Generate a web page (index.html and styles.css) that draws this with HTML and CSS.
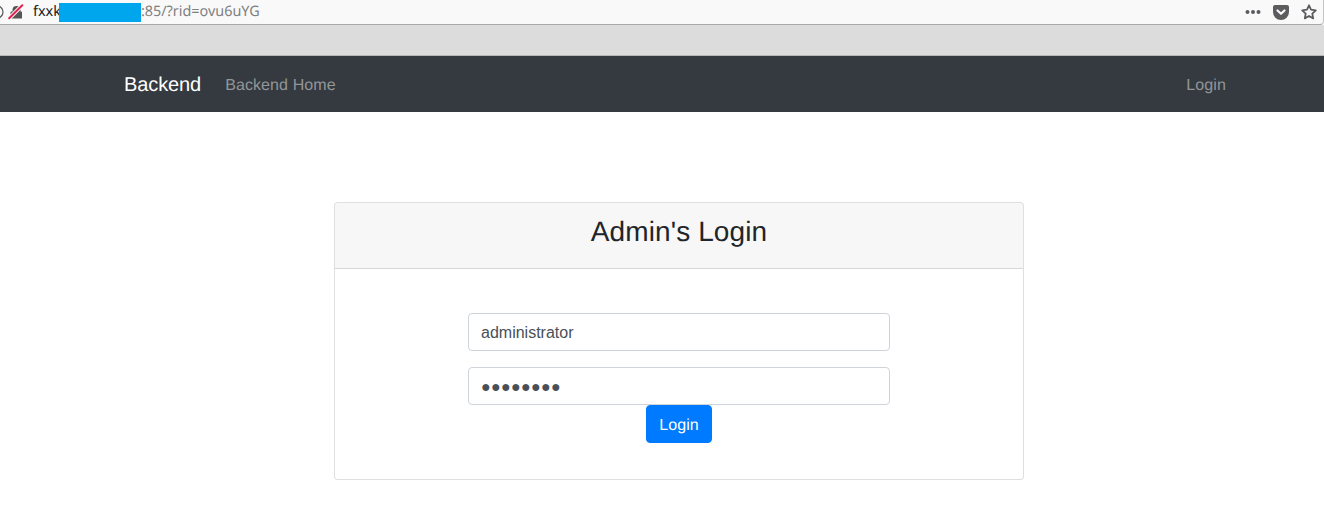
FILE: index.html
```html
<!DOCTYPE html>
<html lang="en">
<head>
<meta charset="utf-8">
<title>Backend</title>
<link rel="stylesheet" href="styles.css">
</head>
<body>
<div class="urlbar">
  <div class="url-left">
    <svg class="info-icon" width="4" height="14" viewBox="0 0 4 14"><circle cx="-3" cy="7" r="6" fill="none" stroke="#555" stroke-width="1.2"/></svg>
    <svg class="lock-icon" width="16" height="16" viewBox="0 0 16 16"><path d="M2.500 14.500V8.500a1 1 0 0 1 1-1H4.500V6a4 4 0 0 1 8 0v1.500h.5a1 1 0 0 1 1 1v6z" fill="#555"/><path d="M0 15.500L15 .5" stroke="#f9f9fa" stroke-width="4"/><path d="M1.200 14.300L14.300 1.200" stroke="#e0234e" stroke-width="2" stroke-linecap="round"/></svg>
    <div class="url-text"><span class="host">fxxk</span><span class="redact"></span><span class="path">:85/?rid=ovu6uYG</span></div>
  </div>
  <div class="url-right">
    <svg width="16" height="6" viewBox="0 0 16 6"><circle cx="2.500" cy="3" r="2" fill="#5c5c5f"/><circle cx="8" cy="3" r="2" fill="#5c5c5f"/><circle cx="13.500" cy="3" r="2" fill="#5c5c5f"/></svg>
    <svg width="16" height="15" viewBox="0 0 16 15"><path d="M2 0h12a2 2 0 0 1 2 2v5a8 8 0 0 1-16 0V2a2 2 0 0 1 2-2z" fill="#5c5c5f"/><path d="M4.500 5.500L8 8.800l3.500-3.300" fill="none" stroke="#f9f9fa" stroke-width="2.200" stroke-linecap="round" stroke-linejoin="round"/></svg>
    <svg width="16" height="16" viewBox="0 0 16 16"><path d="M8 1.300l2 4.400 4.800.6-3.500 3.300.9 4.800L8 12l-4.200 2.400.9-4.800L1.200 6.300 6 5.700z" fill="none" stroke="#5c5c5f" stroke-width="1.800" stroke-linejoin="round"/></svg>
  </div>
</div>
<div class="toolbar"></div>
<nav class="navbar">
  <div class="nav-inner">
    <div class="nav-left">
      <a class="brand" href="#">Backend</a>
      <a class="nav-link" href="#">Backend Home</a>
    </div>
    <a class="nav-link" href="#">Login</a>
  </div>
</nav>
<main class="container">
  <section class="card">
    <header class="card-header"><h3 class="card-title">Admin's Login</h3></header>
    <form class="card-body">
      <input class="field" type="text" value="administrator">
      <input class="field field-mask" type="text" value="●●●●●●●●">
      <button class="btn" type="button">Login</button>
    </form>
  </section>
</main>
</body>
</html>
```
FILE: styles.css
```css
* { box-sizing: border-box; }
html, body { margin: 0; padding: 0; }
body {
  background: #fff;
  color: #212529;
  font-family: "Liberation Sans", Arial, sans-serif;
  font-size: 16px;
  line-height: 1.5;
  height: 515px;
  overflow: hidden;
  text-rendering: geometricPrecision;
}
.urlbar {
  height: 25px;
  background: #f9f9fa;
  border-bottom: 1px solid #a9a9a9;
  border-right: 1px solid #c4c4c4;
  border-bottom-right-radius: 4px;
  display: flex;
  align-items: center;
  justify-content: space-between;
  padding-right: 6px;
}
.url-left { display: flex; align-items: center; height: 100%; }
.info-icon { display: block; }
.lock-icon { display: block; margin-left: 4px; }
.url-text {
  margin-left: 9px;
  font-family: "Noto Sans", sans-serif;
  font-size: 14.400px;
  line-height: 20px;
  display: flex;
  align-items: center;
}
.host { color: #1a1a1a; }
.redact { width: 82px; height: 19px; background: #00a6ed; margin-left: -2px; }
.path { color: #808080; }
.url-right { display: flex; align-items: center; gap: 12px; }
.toolbar {
  height: 31px;
  background: #dcdcdc;
  border-bottom: 1px solid #b8b8b8;
}
.navbar {
  height: 56px;
  background: #343a40;
  padding-left: 109px;
}
.nav-inner {
  width: 1140px;
  height: 100%;
  padding: 0 15px;
  display: flex;
  align-items: center;
  justify-content: space-between;
}
.nav-left { display: flex; align-items: center; }
.brand {
  color: #fff;
  font-size: 20px;
  line-height: 30px;
  text-decoration: none;
  margin-right: 16px;
  padding-top: 2px;
  letter-spacing: -0.1px;
}
.nav-link {
  color: rgba(255, 255, 255, 0.47);
  padding: 12px 8px 8px;
  text-decoration: none;
  font-size: 16px;
  line-height: 24px;
  letter-spacing: 0.1px;
}
.container {
  width: 1140px;
  margin-left: 109px;
  padding: 90px 15px 0;
}
.card {
  width: 690px;
  height: 278px;
  margin: 0 auto;
  background: #fff;
  border: 1px solid rgba(0, 0, 0, 0.125);
  border-radius: 4px;
}
.card-header {
  height: 66px;
  padding: 12px 20px;
  background: rgba(0, 0, 0, 0.03);
  border-bottom: 1px solid rgba(0, 0, 0, 0.125);
  border-radius: 3px 3px 0 0;
}
.card-title {
  margin: 0;
  font-size: 28px;
  font-weight: 500;
  line-height: 33.600px;
  text-align: center;
  letter-spacing: 0.1px;
}
.card-body {
  display: flex;
  flex-direction: column;
  align-items: center;
  padding-top: 44px;
}
.field {
  display: block;
  width: 422px;
  height: 38px;
  padding: 7px 12px 5px;
  font-family: inherit;
  font-size: 16px;
  line-height: 24px;
  color: #495057;
  background: #fff;
  border: 1px solid #ced4da;
  border-radius: 4px;
  margin-bottom: 16px;
}
.field-mask { margin-bottom: 0; letter-spacing: 0.35px; }
.btn {
  width: 66px;
  height: 38px;
  padding: 8px 11px 4px;
  font-family: inherit;
  font-size: 16px;
  line-height: 24px;
  letter-spacing: 0.1px;
  color: #fff;
  background: #007bff;
  border: 1px solid #007bff;
  border-radius: 4px;
  text-rendering: geometricPrecision;
}
```
